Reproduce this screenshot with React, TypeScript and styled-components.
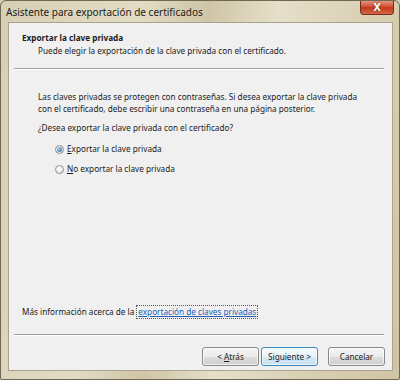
import React from 'react'
import styled, { createGlobalStyle } from 'styled-components'

const GlobalStyle = createGlobalStyle`
  html, body {
    margin: 0;
    padding: 0;
    background: #d8cfb2;
  }
  body {
    font-family: 'Noto Sans', 'Open Sans', sans-serif;
    color: #1b1b1b;
  }
`

const Window = styled('div')`
  width: 400px;
  height: 380px;
  box-sizing: border-box;
  border: 1px solid #6f6854;
  border-radius: 6px 6px 2px 2px;
  background: linear-gradient(
    100deg,
    #d7cfb3 0%,
    #e3dcc4 30%,
    #cfc5a6 45%,
    #e6dfc9 60%,
    #d9d0b3 80%,
    #cfc5a5 100%
  );
  display: flex;
  flex-direction: column;
  overflow: hidden;
`

const TitleBar = styled('div')`
  height: 21px;
  display: flex;
  align-items: flex-start;
  justify-content: space-between;
  padding-left: 5px;
  padding-right: 5px;
`

const Title = styled('span')`
  font-size: 10px;
  line-height: 12px;
  margin-top: 5px;
  color: #1c1c1c;
  white-space: nowrap;
`

const CloseButton = styled('div')`
  width: 34px;
  height: 15px;
  margin-top: -1px;
  box-sizing: border-box;
  border: 1px solid #7a2a1a;
  border-top: none;
  border-radius: 0 0 4px 4px;
  background: linear-gradient(#e8a08c 0%, #d2563a 45%, #c0391c 55%, #d5694a 100%);
  display: flex;
  align-items: center;
  justify-content: center;
  color: #fff;
  font-family: 'DejaVu Sans', sans-serif;
  font-weight: bold;
  font-size: 10px;
  text-shadow: 0 0 2px #5a1a0a;
`

const Client = styled('div')`
  flex: 1;
  margin: 0 6px 8px 7px;
  background: #f0f0f0;
  border: 1px solid #aaa48c;
  display: flex;
  flex-direction: column;
  font-size: 8.2px;
  white-space: nowrap;
`

const Header = styled('div')`
  padding: 9px 0 0 13px;
  height: 36px;
  box-sizing: border-box;
`

const HeaderTitle = styled('div')`
  font-weight: bold;
  line-height: 11px;
`

const HeaderSub = styled('div')`
  margin-top: 2px;
  padding-left: 16px;
  line-height: 11px;
`

const Separator = styled('div')<{ $top: number }>`
  height: 1px;
  margin: ${(p) => p.$top}px 8px 0 5px;
  background: #a0a0a0;
  border-bottom: 1px solid #ffffff;
`

const Body = styled('div')`
  flex: 1;
  padding: 21px 20px 0 29px;
  display: flex;
  flex-direction: column;
`

const Paragraph = styled('p')`
  margin: 0;
  line-height: 12px;
`

const Question = styled('p')`
  margin: 7px 0 0 0;
  line-height: 12px;
`

const Options = styled('div')`
  margin-top: 9px;
  padding-left: 17px;
  display: flex;
  flex-direction: column;
  gap: 8px;
`

const Option = styled('label')`
  display: flex;
  align-items: center;
  gap: 3px;
  line-height: 12px;
`

const Radio = styled('span')<{ $checked?: boolean }>`
  width: 9px;
  height: 9px;
  box-sizing: border-box;
  border-radius: 50%;
  border: 1px solid #8f8f8f;
  background: radial-gradient(circle at 40% 35%, #ffffff, #dcdcdc);
  display: flex;
  align-items: center;
  justify-content: center;
  &::after {
    content: '';
    width: 5px;
    height: 5px;
    border-radius: 50%;
    display: ${(p) => (p.$checked ? 'block' : 'none')};
    background: radial-gradient(circle at 35% 35%, #9fd3f5, #1c5f9e);
  }
`

const Key = styled('span')`
  text-decoration: underline;
`

const MoreInfo = styled('div')`
  margin-top: auto;
  padding-left: 13px;
  line-height: 12px;
  display: flex;
  align-items: center;
`

const Link = styled('a')`
  color: #1e5fb4;
  text-decoration: underline;
  outline: 1px dotted #5a5a5a;
  outline-offset: 0px;
  margin-left: 3px;
  padding: 0 1px;
`

const Footer = styled('div')`
  display: flex;
  flex-direction: column;
`

const ButtonRow = styled('div')`
  display: flex;
  justify-content: flex-end;
  padding: 11px 7px 4px 0;
`

const Button = styled('button')<{ $default?: boolean; $gap?: number }>`
  width: 57px;
  height: 19px;
  margin-left: ${(p) => p.$gap ?? 0}px;
  font-family: inherit;
  font-size: 8.2px;
  color: #1b1b1b;
  border-radius: 3px;
  border: 1px solid ${(p) => (p.$default ? '#3c89bd' : '#8a8a8a')};
  background: ${(p) =>
    p.$default
      ? 'linear-gradient(#f4fafd 0%, #e6f2fa 50%, #d4e8f5 51%, #c8e2f3 100%)'
      : 'linear-gradient(#f4f4f4 0%, #ebebeb 50%, #dddddd 51%, #cfcfcf 100%)'};
  box-shadow: inset 0 0 0 1px rgba(255, 255, 255, 0.7);
  padding: 0;
`

export default function App() {
  return (
    <>
      <GlobalStyle />
      <Window>
        <TitleBar>
          <Title>Asistente para exportación de certificados</Title>
          <CloseButton>X</CloseButton>
        </TitleBar>
        <Client>
          <Header>
            <HeaderTitle>Exportar la clave privada</HeaderTitle>
            <HeaderSub>
              Puede elegir la exportación de la clave privada con el certificado.
            </HeaderSub>
          </Header>
          <Separator $top={9} />
          <Body>
            <Paragraph>
              Las claves privadas se protegen con contraseñas. Si desea exportar la clave privada
              <br />
              con el certificado, debe escribir una contraseña en una página posterior.
            </Paragraph>
            <Question>¿Desea exportar la clave privada con el certificado?</Question>
            <Options>
              <Option>
                <Radio $checked />
                <span>
                  <Key>E</Key>xportar la clave privada
                </span>
              </Option>
              <Option>
                <Radio />
                <span>
                  <Key>N</Key>o exportar la clave privada
                </span>
              </Option>
            </Options>
          </Body>
          <MoreInfo>
            Más información acerca de la
            <Link>exportación de claves privadas</Link>
          </MoreInfo>
          <Footer>
            <Separator $top={16} />
            <ButtonRow>
              <Button>
                &lt; <Key>A</Key>trás
              </Button>
              <Button $default $gap={2}>
                Siguiente &gt;
              </Button>
              <Button $gap={10}>Cancelar</Button>
            </ButtonRow>
          </Footer>
        </Client>
      </Window>
    </>
  )
}
